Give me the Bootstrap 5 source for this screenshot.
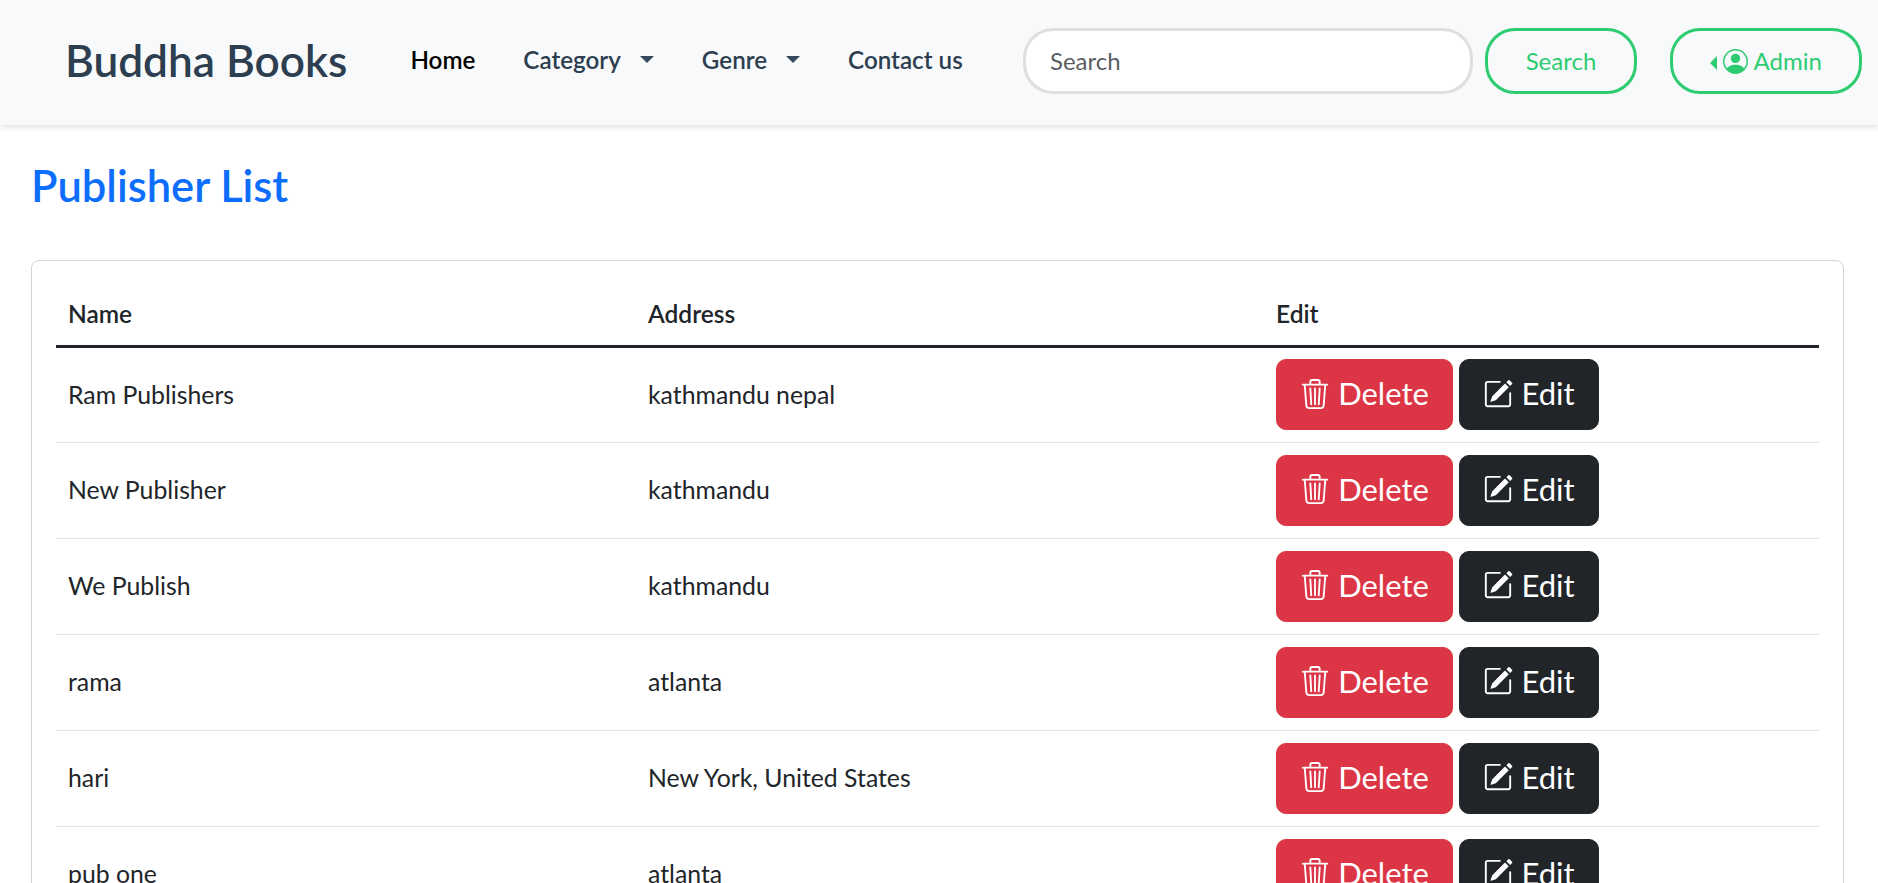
<!DOCTYPE html>
<html lang="en">
<head>
    <meta charset="UTF-8">
    <meta name="viewport" content="width=device-width, initial-scale=1.0">
    <link href="https://cdn.jsdelivr.net/npm/bootstrap@5.3.3/dist/css/bootstrap.min.css" rel="stylesheet" />
    <script defer src="https://cdn.jsdelivr.net/npm/bootstrap@5.3.3/dist/js/bootstrap.bundle.min.js"></script>
    <title>Buddha Books</title>
    <style>
      html, body { overflow: hidden; height: 883px; }
      body { font-family: Lato, "Noto Sans", sans-serif; font-size: 24.8px; color: #212529; }

      .top-bar { height: 125px; padding: 0 16px 4px 65px; box-shadow: 0 3px 6px rgba(0,0,0,.1); }
      .top-bar .navbar-brand { font-size: 44.2px; font-weight: 600; color: #2c3e50; margin-right: 39px; padding: 0; }
      .top-bar .navbar-nav .nav-link { font-size: 24.2px; font-weight: 600; color: #2c3e50; padding: 0 24px; }
      .top-bar .navbar-nav .nav-link.active { color: #000; }
      .top-bar .dropdown-toggle::after { margin-left: 19px; color: #34495e; }

      .search-box { width: 450px; height: 66px; font-size: 24px; border: 3px solid #dfdfdf; border-radius: 30px; padding-left: 24px; color: #495057; }
      .green-btn { height: 66px; font-size: 24px; color: #2ecc71; border: 3px solid #2ecc71; border-radius: 30px; background: transparent; }
      .search-btn { width: 152px; margin-left: 12px; }
      .admin-btn { width: 192px; margin-left: 33px; }
      .dropstart .admin-btn::before { margin-right: 0; }
      .admin-btn svg { width: 25px; height: 25px; vertical-align: -4px; }

      .page-wrap { padding: 36px 34px 0 31px; }
      .page-title { font-size: 43.5px; font-weight: 600; color: #0d6efd; margin: 0; line-height: 48px; }
      .list-box { border: 1px solid #d3d3d3; border-radius: 8px; padding: 12px 24px; margin-top: 51px; }
      .list-table th { font-size: 24.5px; font-weight: 600; height: 73px; border-bottom: 3px solid #212529; vertical-align: middle; padding: 12px 12px 0; }
      .list-table td { height: 96px; vertical-align: middle; padding: 0 12px; border-color: #dee2e6; }
      .list-table .name-col { width: 580px; }
      .list-table .addr-col { width: 628px; }
      .act-gap { gap: 6px; }
      .act-btn { font-size: 31px; height: 71px; border-radius: 10px; padding: 0 0 2px; display: inline-flex; align-items: center; justify-content: center; gap: 8px; }
      .act-btn svg { width: 30px; height: 30px; }
      .del-btn { width: 177px; }
      .edit-btn { width: 140px; }
    </style>
</head>
<body>
    <svg class="d-none">
      <symbol id="ic-trash" viewBox="0 0 16 16"><path fill="currentColor" d="M6.5 1h3a.5.5 0 0 1 .5.5v1H6v-1a.5.5 0 0 1 .5-.5ZM11 2.5v-1A1.5 1.5 0 0 0 9.5 0h-3A1.5 1.5 0 0 0 5 1.5v1H2.506a.58.58 0 0 0-.01 0H1.5a.5.5 0 0 0 0 1h.538l.853 10.66A2 2 0 0 0 4.885 16h6.23a2 2 0 0 0 1.994-1.84l.853-10.66h.538a.5.5 0 0 0 0-1h-.995a.59.59 0 0 0-.01 0H11Zm1.958 1-.846 10.58a1 1 0 0 1-.997.92h-6.23a1 1 0 0 1-.997-.92L3.042 3.5h9.916Zm-7.487 1a.5.5 0 0 1 .528.47l.5 8.5a.5.5 0 0 1-.998.06L5 5.03a.5.5 0 0 1 .47-.53Zm5.058 0a.5.5 0 0 1 .47.53l-.5 8.5a.5.5 0 1 1-.998-.06l.5-8.5a.5.5 0 0 1 .528-.47ZM8 4.5a.5.5 0 0 1 .5.5v8.5a.5.5 0 0 1-1 0V5a.5.5 0 0 1 .5-.5Z"/></symbol>
      <symbol id="ic-edit" viewBox="0 0 16 16"><path fill="currentColor" d="M15.502 1.94a.5.5 0 0 1 0 .706L14.459 3.69l-2-2L13.502.646a.5.5 0 0 1 .707 0l1.293 1.293zm-1.75 2.456-2-2L4.939 9.21a.5.5 0 0 0-.121.196l-.805 2.414a.25.25 0 0 0 .316.316l2.414-.805a.5.5 0 0 0 .196-.12l6.813-6.814z"/><path fill="currentColor" fill-rule="evenodd" d="M1 13.5A1.5 1.5 0 0 0 2.5 15h11a1.5 1.5 0 0 0 1.5-1.5v-6a.5.5 0 0 0-1 0v6a.5.5 0 0 1-.5.5h-11a.5.5 0 0 1-.5-.5v-11a.5.5 0 0 1 .5-.5H9a.5.5 0 0 0 0-1H2.5A1.5 1.5 0 0 0 1 2.5v11z"/></symbol>
    </svg>

    <nav class="navbar navbar-expand-lg bg-light top-bar flex-nowrap">
      <a class="navbar-brand" href="#">Buddha Books</a>
      <ul class="navbar-nav me-auto">
        <li class="nav-item"><a class="nav-link active" href="#">Home</a></li>
        <li class="nav-item dropdown"><a class="nav-link dropdown-toggle" href="#" role="button" data-bs-toggle="dropdown">Category</a></li>
        <li class="nav-item dropdown"><a class="nav-link dropdown-toggle" href="#" role="button" data-bs-toggle="dropdown">Genre</a></li>
        <li class="nav-item"><a class="nav-link" href="#">Contact us</a></li>
      </ul>
      <form class="d-flex">
        <input class="form-control search-box" type="search" placeholder="Search">
        <button class="btn green-btn search-btn" type="button">Search</button>
      </form>
      <div class="dropstart">
        <button class="btn green-btn admin-btn dropdown-toggle" type="button" data-bs-toggle="dropdown">
          <svg viewBox="0 0 16 16" fill="currentColor"><path d="M11 6a3 3 0 1 1-6 0 3 3 0 0 1 6 0z"/><path fill-rule="evenodd" d="M0 8a8 8 0 1 1 16 0A8 8 0 0 1 0 8zm8-7a7 7 0 0 0-5.468 11.37C3.242 11.226 4.805 10 8 10s4.757 1.225 5.468 2.37A7 7 0 0 0 8 1z"/></svg>
          Admin
        </button>
      </div>
    </nav>

    <main class="page-wrap">
      <h2 class="page-title">Publisher List</h2>
      <div class="list-box">
        <table class="table list-table mb-0">
          <thead>
            <tr><th class="name-col">Name</th><th class="addr-col">Address</th><th>Edit</th></tr>
          </thead>
          <tbody id="rows"></tbody>
        </table>
      </div>
    </main>

    <script>
      let rows = [
        ["Ram Publishers", "kathmandu nepal"],
        ["New Publisher", "kathmandu"],
        ["We Publish", "kathmandu"],
        ["rama", "atlanta"],
        ["hari", "New York, United States"],
        ["pub one", "atlanta"]
      ]
      let output = ""
      rows.forEach(item => {
        output += `
          <tr>
            <td>${item[0]}</td>
            <td>${item[1]}</td>
            <td>
              <div class="d-flex act-gap">
                <a href="#" class="btn btn-danger act-btn del-btn"><svg><use href="#ic-trash"></use></svg>Delete</a>
                <a href="#" class="btn btn-dark act-btn edit-btn"><svg><use href="#ic-edit"></use></svg>Edit</a>
              </div>
            </td>
          </tr>`
      })
      document.querySelector('#rows').innerHTML = output
    </script>
</body>
</html>
